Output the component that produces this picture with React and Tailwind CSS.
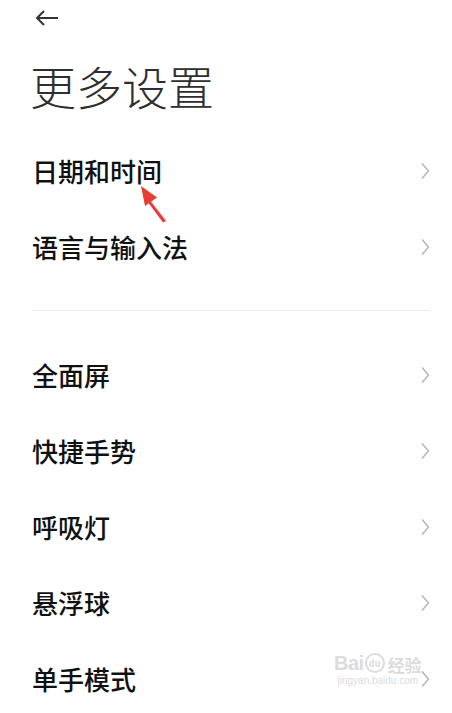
const ITEMS_TOP = ["日期和时间", "语言与输入法"];
const ITEMS_BOTTOM = ["全面屏", "快捷手势", "呼吸灯", "悬浮球", "单手模式"];

const FONT = { fontFamily: '"Noto Sans CJK SC", "Noto Sans", sans-serif' };

const Chevron = () => (
  <svg width="10" height="18" viewBox="0 0 10 18" className="text-[#b4b4b4]">
    <path d="M2 1.5 L8.5 9 L2 16.5" fill="none" stroke="currentColor" strokeWidth="1.4" />
  </svg>
);

const Row = ({ label }) => (
  <div className="h-[76px] flex items-center justify-between pl-[32px] pr-[22px]">
    <span className="text-[26px] font-medium text-[#111] leading-none">{label}</span>
    <Chevron />
  </div>
);

export default function App() {
  return (
    <div className="relative w-[452px] h-[713px] bg-white overflow-hidden" style={FONT}>
      <div className="h-[36px] flex items-center pl-[34px]">
        <svg width="26" height="18" viewBox="0 0 26 18" className="text-[#333]">
          <path d="M24 9 H3 M10 2 L3 9 L10 16" fill="none" stroke="currentColor" strokeWidth="2" />
        </svg>
      </div>
      <div className="h-[97px] flex items-center pl-[30px]">
        <h1 className="text-[46px] font-light text-[#2e2e2e] leading-none">更多设置</h1>
      </div>
      {ITEMS_TOP.map((t) => (
        <Row key={t} label={t} />
      ))}
      <div className="pt-[25px] pb-[26px] pl-[32px] pr-[22px]">
        <div className="h-px bg-[#ececec]" />
      </div>
      {ITEMS_BOTTOM.map((t) => (
        <Row key={t} label={t} />
      ))}

      {/* red annotation arrow */}
      <svg className="absolute left-0 top-0" width="452" height="713" viewBox="0 0 452 713">
        <path d="M149 199 L166 221 L163 222.5 L147 201 Z" fill="#ea3b35" />
        <path d="M141 186 L145 206 L157 197.5 Z" fill="#ea3b35" />
      </svg>

      {/* watermark */}
      <div className="absolute left-[334px] top-[653px] flex flex-col items-center text-[#dcdcdc] leading-none">
        <div className="flex items-end gap-[1px]">
          <span className="text-[20px] font-bold tracking-tight" style={{ fontFamily: '"Liberation Sans", sans-serif' }}>Bai</span>
          <span className="w-[20px] h-[20px] rounded-full border-2 border-[#dcdcdc] text-[9px] flex items-center justify-center font-bold">du</span>
          <span className="text-[17px] font-bold ml-[2px]">经验</span>
        </div>
        <span className="text-[10px] mt-[3px]" style={{ fontFamily: '"Liberation Sans", sans-serif' }}>jingyan.baidu.com</span>
      </div>
    </div>
  );
}
